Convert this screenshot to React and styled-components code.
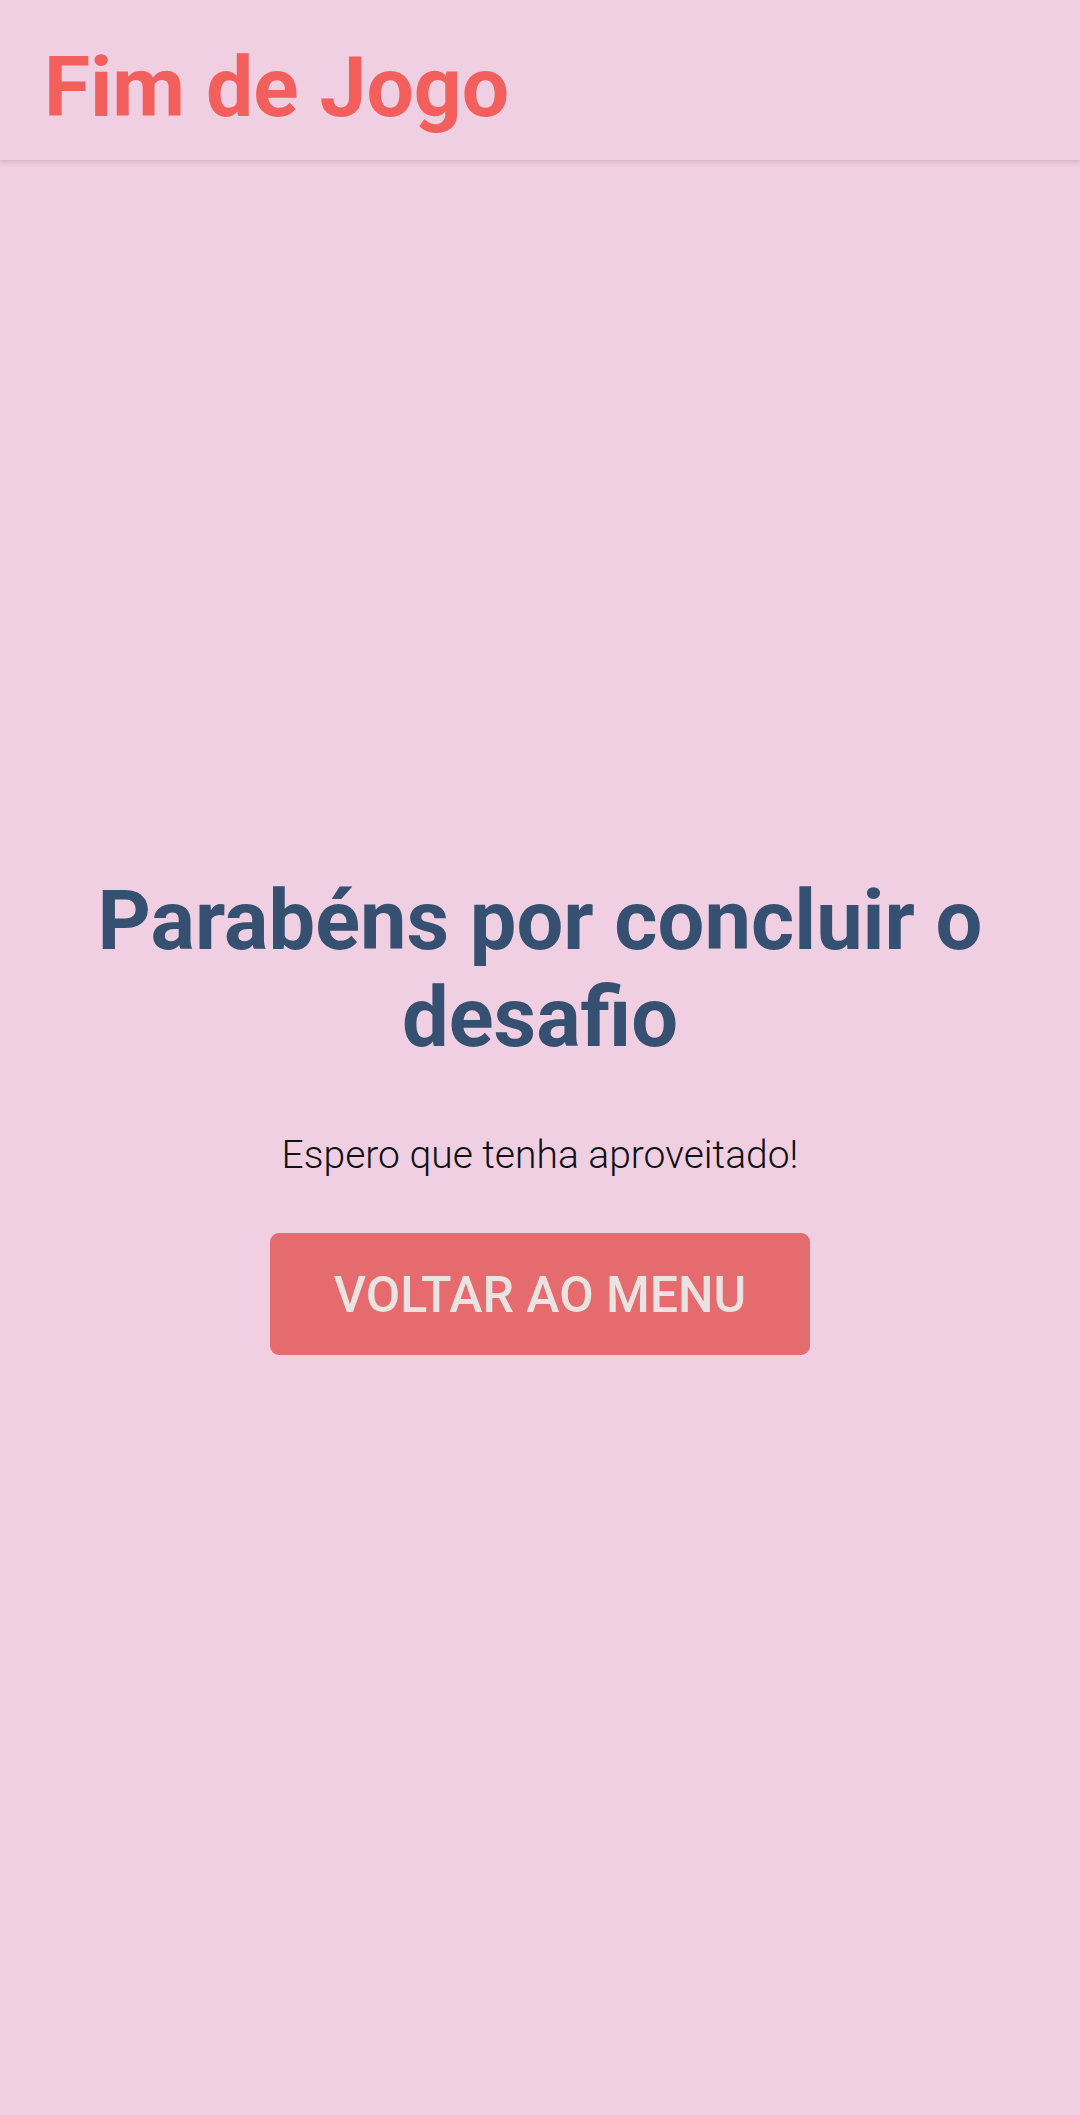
import styled, { createGlobalStyle } from 'styled-components';

const GlobalStyle = createGlobalStyle`
  html, body {
    margin: 0;
    padding: 0;
    background-color: #f0cfe3;
    font-family: Roboto, "Liberation Sans", sans-serif;
  }
`;

const Page = styled.div`
  min-height: 2115px;
  display: flex;
  flex-direction: column;
  background-color: #f0cfe3;
`;

const Header = styled.header`
  height: 160px;
  box-sizing: border-box;
  padding: 38px 44px 0;
  box-shadow: 0 2px 5px rgba(120, 60, 100, 0.22);
`;

const Title = styled.h1`
  margin: 0;
  font-size: 84px;
  font-weight: 700;
  color: #f25f5c;
  line-height: normal;
`;

const Main = styled.main`
  flex: 1;
  display: flex;
  flex-direction: column;
  align-items: center;
  justify-content: center;
  padding: 0 60px 48px;
  text-align: center;
`;

const Heading = styled.h2`
  margin: 0 0 66px;
  font-size: 83px;
  font-weight: 700;
  color: #355070;
  line-height: 97px;
`;

const Subtitle = styled.p`
  margin: 0 0 55px;
  font-size: 39px;
  font-weight: 300;
  color: #111;
  line-height: normal;
`;

const MenuButton = styled.button`
  width: 540px;
  height: 122px;
  padding-top: 3px;
  border: none;
  border-radius: 9px;
  background-color: #e56b6f;
  color: #ebe3e1;
  font-family: Roboto, "Liberation Sans", sans-serif;
  font-size: 50px;
  font-weight: 500;
  text-transform: uppercase;
  cursor: pointer;
`;

const App = () => {
  return (
    <Page>
      <GlobalStyle />
      <Header>
        <Title>Fim de Jogo</Title>
      </Header>
      <Main>
        <Heading>Parabéns por concluir o desafio</Heading>
        <Subtitle>Espero que tenha aproveitado!</Subtitle>
        <MenuButton>Voltar ao menu</MenuButton>
      </Main>
    </Page>
  );
};

export default App;
